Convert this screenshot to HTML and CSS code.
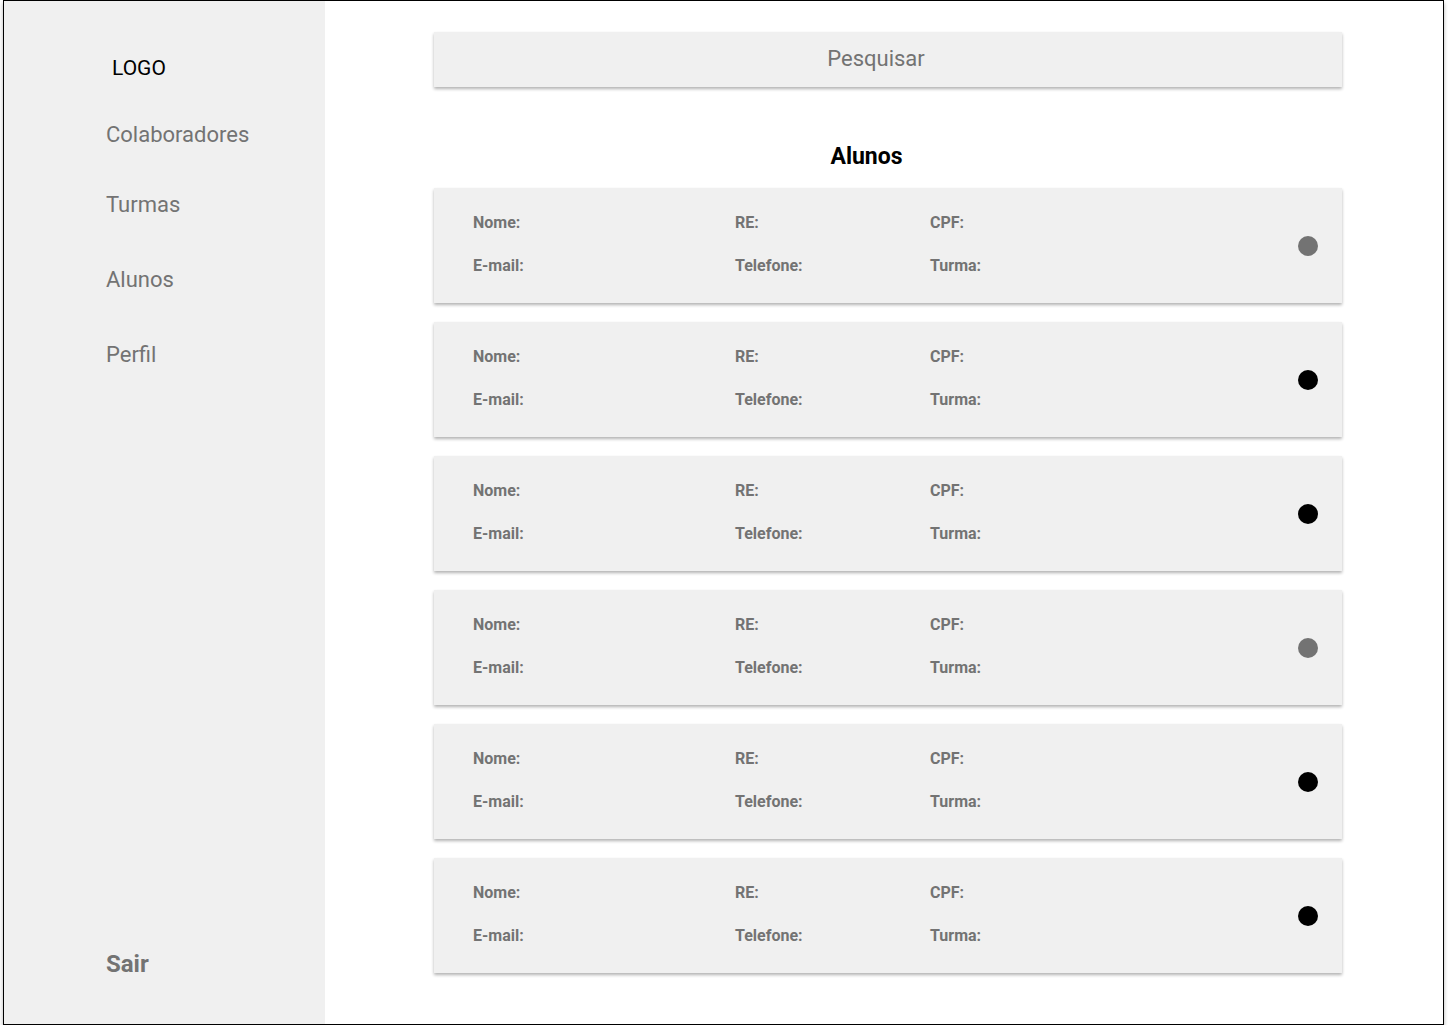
FILE: index.html
```html
<!DOCTYPE html>
<html lang="pt">
<head>
<meta charset="utf-8">
<title>Alunos</title>
<link rel="stylesheet" href="styles.css">
</head>
<body>
<div class="frame">
  <aside class="sidebar">
    <div class="logo">LOGO</div>
    <nav class="nav">
      <a class="nav-item first">Colaboradores</a>
      <a class="nav-item second">Turmas</a>
      <a class="nav-item">Alunos</a>
      <a class="nav-item">Perfil</a>
    </nav>
    <a class="logout">Sair</a>
  </aside>
  <main class="main">
    <div class="search">Pesquisar</div>
    <h1 class="title">Alunos</h1>
    <div class="list">
      <div class="card">
        <div class="fields">
          <span>Nome:</span><span>RE:</span><span>CPF:</span>
          <span>E-mail:</span><span>Telefone:</span><span>Turma:</span>
        </div>
        <span class="dot gray"></span>
      </div>
      <div class="card">
        <div class="fields">
          <span>Nome:</span><span>RE:</span><span>CPF:</span>
          <span>E-mail:</span><span>Telefone:</span><span>Turma:</span>
        </div>
        <span class="dot black"></span>
      </div>
      <div class="card">
        <div class="fields">
          <span>Nome:</span><span>RE:</span><span>CPF:</span>
          <span>E-mail:</span><span>Telefone:</span><span>Turma:</span>
        </div>
        <span class="dot black"></span>
      </div>
      <div class="card">
        <div class="fields">
          <span>Nome:</span><span>RE:</span><span>CPF:</span>
          <span>E-mail:</span><span>Telefone:</span><span>Turma:</span>
        </div>
        <span class="dot gray"></span>
      </div>
      <div class="card">
        <div class="fields">
          <span>Nome:</span><span>RE:</span><span>CPF:</span>
          <span>E-mail:</span><span>Telefone:</span><span>Turma:</span>
        </div>
        <span class="dot black"></span>
      </div>
      <div class="card">
        <div class="fields">
          <span>Nome:</span><span>RE:</span><span>CPF:</span>
          <span>E-mail:</span><span>Telefone:</span><span>Turma:</span>
        </div>
        <span class="dot black"></span>
      </div>
    </div>
  </main>
</div>
</body>
</html>
```
FILE: styles.css
```css
* { box-sizing: border-box; }
html, body { margin: 0; padding: 0; background: #fff; }
body {
  font-family: Roboto, "Liberation Sans", sans-serif;
  padding-left: 3px;
}
.frame {
  width: 1441px;
  height: 1025px;
  border: 1.5px solid #000;
  display: flex;
  background: #fff;
  box-shadow: 0 3px 4px rgba(0,0,0,0.3);
}
.sidebar {
  width: 321px;
  background: #f0f0f0;
  display: flex;
  flex-direction: column;
  padding: 54px 0 0 102px;
}
.logo {
  font-size: 21px;
  color: #000;
  margin-left: 6px;
  line-height: 26px;
}
.nav {
  display: flex;
  flex-direction: column;
  margin-top: 41px;
}
.nav-item {
  font-size: 22px;
  color: #737373;
  line-height: 26px;
  margin-bottom: 49px;
}
.nav-item.first { margin-bottom: 44px; }
.logout {
  margin-top: auto;
  margin-bottom: 45px;
  font-size: 24px;
  font-weight: bold;
  color: #737373;
  line-height: 30px;
}
.main {
  flex: 1;
  padding: 31px 0 0 109px;
  display: flex;
  flex-direction: column;
}
.search {
  width: 908px;
  height: 55px;
  background: #f0f0f0;
  box-shadow: 0 2px 3px rgba(0,0,0,0.3);
  display: flex;
  align-items: center;
  justify-content: center;
  font-size: 22px;
  color: #737373;
  padding: 0 24px 3px 0;
}
.title {
  width: 865px;
  margin: 57px 0 0 0;
  text-align: center;
  font-size: 23px;
  font-weight: bold;
  line-height: 26px;
  color: #000;
}
.list {
  margin-top: 18px;
  display: flex;
  flex-direction: column;
  gap: 19px;
}
.card {
  width: 908px;
  height: 115px;
  background: #f0f0f0;
  box-shadow: 0 2px 3px rgba(0,0,0,0.3);
  display: flex;
  align-items: center;
  padding: 0 24px 0 39px;
}
.fields {
  flex: 1;
  display: grid;
  grid-template-columns: 262px 195px 1fr;
  row-gap: 24px;
  font-size: 16px;
  font-weight: bold;
  color: #737373;
  line-height: 19px;
  margin-top: -4px;
}
.dot {
  width: 20px;
  height: 20px;
  border-radius: 50%;
  margin-top: 1px;
}
.dot.gray { background: #737373; }
.dot.black { background: #000; }
```
